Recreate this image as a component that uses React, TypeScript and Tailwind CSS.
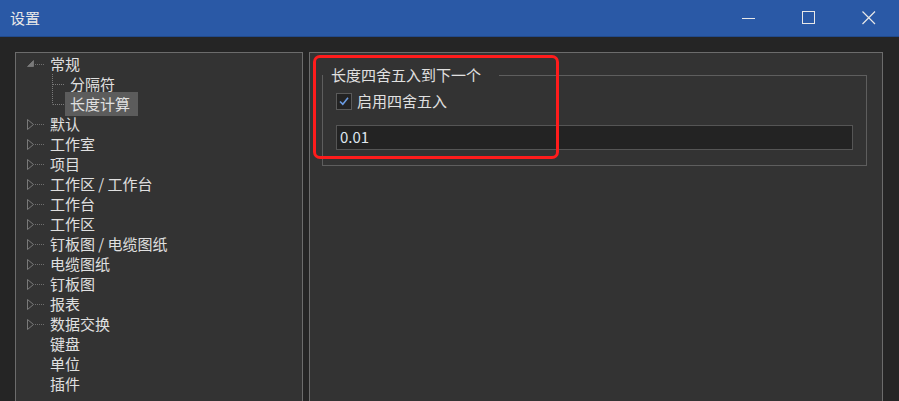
import React from 'react';

const font = { fontFamily: '"Noto Sans CJK SC", "Noto Sans", sans-serif' };

type Node = { label: string; kind: 'collapsed' | 'expanded' | 'leaf' };

const topNodes: Node[] = [
  { label: '默认', kind: 'collapsed' },
  { label: '工作室', kind: 'collapsed' },
  { label: '项目', kind: 'collapsed' },
  { label: '工作区 / 工作台', kind: 'collapsed' },
  { label: '工作台', kind: 'collapsed' },
  { label: '工作区', kind: 'collapsed' },
  { label: '钉板图 / 电缆图纸', kind: 'collapsed' },
  { label: '电缆图纸', kind: 'collapsed' },
  { label: '钉板图', kind: 'collapsed' },
  { label: '报表', kind: 'collapsed' },
  { label: '数据交换', kind: 'collapsed' },
  { label: '键盘', kind: 'leaf' },
  { label: '单位', kind: 'leaf' },
  { label: '插件', kind: 'leaf' },
];

function Toggle({ kind }: { kind: Node['kind'] }) {
  return (
    <svg width="23" height="20" className="shrink-0">
      {kind === 'collapsed' && (
        <>
          <path d="M0.5 5.5 L6.5 10.5 L0.5 15.5 Z" fill="none" stroke="#7a7a7a" strokeWidth="1" />
          <line x1="8" y1="10.5" x2="18" y2="10.5" stroke="#6e6e6e" strokeDasharray="1 1" />
        </>
      )}
      {kind === 'expanded' && (
        <>
          <path d="M6.5 6.5 L6.5 12.5 L0.5 12.5 Z" fill="#7a7a7a" stroke="#8a8a8a" strokeWidth="0.6" />
          <line x1="8" y1="10.5" x2="18" y2="10.5" stroke="#6e6e6e" strokeDasharray="1 1" />
        </>
      )}
    </svg>
  );
}

function ChildLine({ last }: { last?: boolean }) {
  return (
    <svg width="18" height="20" className="shrink-0">
      <line x1="0.5" y1="0" x2="0.5" y2={last ? 10.5 : 20} stroke="#7a7a7a" strokeDasharray="1 1" />
      <line x1="1" y1="10.5" x2="12" y2="10.5" stroke="#7a7a7a" strokeDasharray="1 1" />
    </svg>
  );
}

export default function App() {
  return (
    <div className="w-[899px] h-[401px] overflow-hidden flex flex-col bg-[#252525] text-[15px]" style={font}>
      {/* Title bar */}
      <div className="h-[37px] shrink-0 flex items-center bg-[#2a59a6] border-b border-[#214a8c]">
        <span className="pl-[10px] text-[#e8e8e8] leading-[20px]">设置</span>
        <div className="ml-auto flex items-center h-full">
          <div className="w-[60px] h-full flex items-center justify-center">
            <svg width="14" height="14"><line x1="0" y1="7.5" x2="13" y2="7.5" stroke="#e8e8e8" /></svg>
          </div>
          <div className="w-[60px] h-full flex items-center justify-center">
            <svg width="14" height="14"><rect x="0.5" y="0.5" width="12" height="12" fill="none" stroke="#e8e8e8" /></svg>
          </div>
          <div className="w-[60px] h-full flex items-center justify-center">
            <svg width="14" height="14"><path d="M0.5 0.5 L13 13 M13 0.5 L0.5 13" stroke="#e8e8e8" strokeWidth="1.2" /></svg>
          </div>
        </div>
      </div>

      {/* Content */}
      <div className="flex gap-[6px] pl-[15px] pt-[15px]">
        {/* Tree panel */}
        <div className="w-[288px] h-[380px] shrink-0 border border-[#6c6c6c] bg-[#333333] pt-[1px] text-[#e0e0e0]">
          <div className="flex flex-col pl-[11px]">
            <div className="flex items-center h-[20px] leading-[20px]">
              <Toggle kind="expanded" />
              <span>常规</span>
            </div>
            <div className="flex items-center h-[20px] leading-[20px] pl-[25px]">
              <ChildLine />
              <span>分隔符</span>
            </div>
            <div className="flex items-center h-[20px] leading-[20px] pl-[25px]">
              <ChildLine last />
              <span className="-ml-[5px] pl-[5px] pr-[8px] py-[2px] bg-[#5c5c5c] relative">长度计算</span>
            </div>
            {topNodes.map((n) => (
              <div key={n.label} className="flex items-center h-[20px] leading-[20px]">
                <Toggle kind={n.kind} />
                <span className="whitespace-pre">{n.label}</span>
              </div>
            ))}
          </div>
        </div>

        {/* Settings panel */}
        <div className="relative w-[574px] h-[380px] shrink-0 border border-[#6c6c6c] bg-[#333333] pt-[12px] pl-[12px] pr-[15px]">
          <fieldset className="border border-[#5e5e5e] px-[13px] pb-[15px]">
            <legend className="pl-[8px] pr-[18px] -ml-[13px] leading-[20px] text-[#e0e0e0]">长度四舍五入到下一个</legend>
            <div className="flex items-center gap-[5px] mt-[7px] h-[18px]">
              <div className="w-[16px] h-[17px] border border-[#5a5a5a] bg-[#232323] flex items-center justify-center">
                <svg width="12" height="12" viewBox="0 0 12 12">
                  <path d="M2 6.5 L4.8 9.2 L10 2.8" fill="none" stroke="#6a9ae0" strokeWidth="1.6" />
                </svg>
              </div>
              <span className="text-[#e0e0e0] leading-[20px]">启用四舍五入</span>
            </div>
            <div className="mt-[15px] h-[25px] border border-[#555555] bg-[#232323] flex items-center pl-[3px] text-[#dfe6ee] text-[15px]">
              0.01
            </div>
          </fieldset>
          <div className="absolute left-[3px] top-[2px] w-[246px] h-[104px] border-[3px] border-[#ff1c1c] rounded-[7px]" />
        </div>
      </div>
    </div>
  );
}
